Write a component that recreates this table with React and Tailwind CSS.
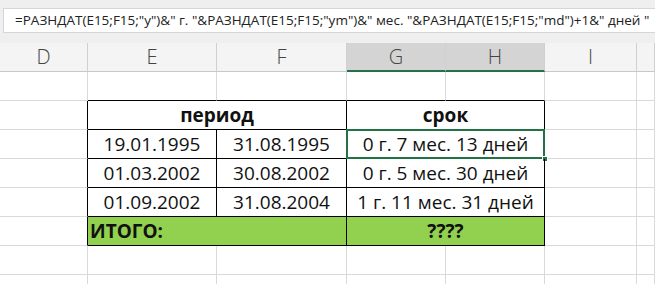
const cols = ["D", "E", "F", "G", "H", "I", ""];
const grid = "border-r border-b border-[#d9d9d9]";

const Cell = ({ className = "", children }) => (
  <div className={`h-[29px] flex items-center justify-center text-[19px] text-[#111] ${className}`}>
    {children}
  </div>
);

const rows = [
  ["19.01.1995", "31.08.1995", "0 г. 7 мес. 13 дней"],
  ["01.03.2002", "30.08.2002", "0 г. 5 мес. 30 дней"],
  ["01.09.2002", "31.08.2004", "1 г. 11 мес. 31 дней"],
];

export default function App() {
  return (
    <div className="w-[655px] h-[284px] overflow-hidden bg-white" style={{ fontFamily: '"Open Sans", "Noto Sans", sans-serif' }}>
      {/* formula bar */}
      <div className="h-[43px] bg-[#efefef] pt-[8px] pl-[3px]">
        <div className="h-[25px] bg-white border-l border-t border-b border-[#d6d6d6] flex items-center pl-[11px] text-[13.5px] text-[#222] whitespace-nowrap overflow-hidden">
          =РАЗНДАТ(E15;F15;"y")&amp;" г. "&amp;РАЗНДАТ(E15;F15;"ym")&amp;" мес. "&amp;РАЗНДАТ(E15;F15;"md")+1&amp;" дней "
        </div>
      </div>

      <div className="grid grid-cols-[88px_129px_130px_99px_99px_92px_1fr]">
        {/* column headers */}
        {cols.map((c, i) => {
          const sel = c === "G" || c === "H";
          return (
            <div
              key={c + i}
              className={`h-[29px] flex items-center justify-center text-[20px] font-light text-[#444] border-r border-[#d0d0d0] ${
                sel ? "bg-[#d4d4d4] border-b-2 border-b-[#217346]" : "bg-[#f4f4f4] border-b border-b-[#c8c8c8]"
              }`}
            >
              {c}
            </div>
          );
        })}

        {/* empty row above the table */}
        <Cell className={grid} />
        <Cell className="border-r border-[#d9d9d9] border-b border-b-black" />
        <Cell className="border-r border-[#d9d9d9] border-b border-b-black" />
        <Cell className="border-r border-[#d9d9d9] border-b border-b-black" />
        <Cell className="border-r border-[#d9d9d9] border-b border-b-black" />
        <Cell className={grid} />
        <Cell className={grid} />

        {/* header row */}
        <Cell className="border-b border-[#d9d9d9] border-r border-r-black" />
        <Cell className="col-span-2 font-bold border-r border-b border-black">период</Cell>
        <Cell className="col-span-2 font-bold border-r border-b border-black">срок</Cell>
        <Cell className={grid} />
        <Cell className={grid} />

        {/* data rows */}
        {rows.map((r, i) => (
          <div key={i} className="contents">
            <Cell className="border-b border-[#d9d9d9] border-r border-r-black" />
            <Cell className="border-r border-b border-black">{r[0]}</Cell>
            <Cell className="border-r border-b border-black">{r[1]}</Cell>
            <Cell className="col-span-2 border-r border-b border-black relative">
              {r[2]}
              {i === 0 && (
                <>
                  <div className="absolute -left-px -top-px -right-px -bottom-px border-2 border-[#217346]" />
                  <div className="absolute -right-[4px] -bottom-[4px] w-[6px] h-[6px] bg-[#217346] border border-white" />
                </>
              )}
            </Cell>
            <Cell className={grid} />
            <Cell className={grid} />
          </div>
        ))}

        {/* total row */}
        <Cell className="border-b border-[#d9d9d9] border-r border-r-black" />
        <Cell className="col-span-2 justify-start pl-[2px] font-bold bg-[#92d050] border-r border-b border-black">ИТОГО:</Cell>
        <Cell className="col-span-2 font-bold bg-[#92d050] border-r border-b border-black">????</Cell>
        <Cell className={grid} />
        <Cell className={grid} />

        {/* empty rows */}
        {[0, 1].map((k) =>
          cols.map((c, i) => <Cell key={`${k}-${i}`} className={grid} />)
        )}
      </div>
    </div>
  );
}
